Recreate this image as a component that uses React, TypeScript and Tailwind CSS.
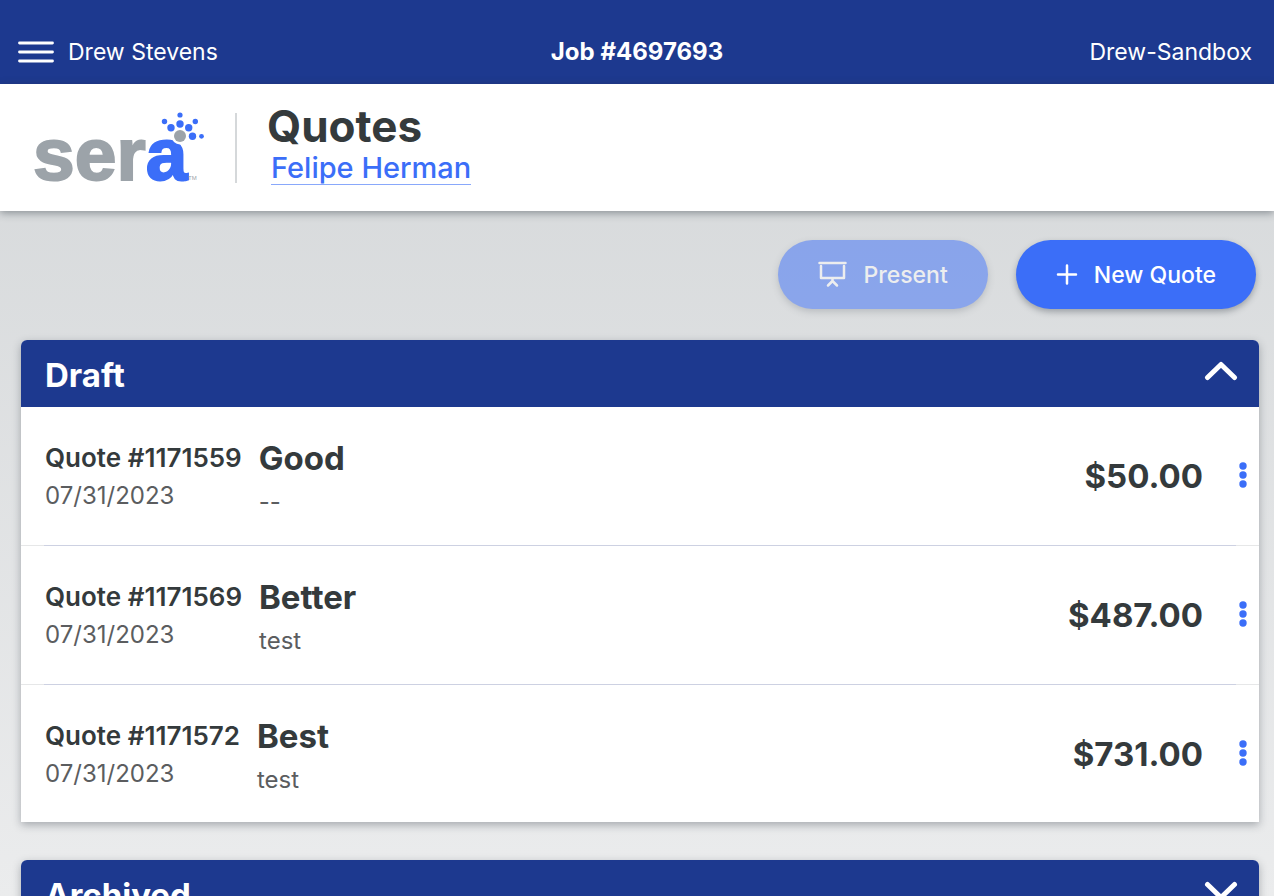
import { useState } from "react";

type Quote = {
  id: number;
  date: string;
  name: string;
  desc: string;
  total: string;
};

const drafts: Quote[] = [
  { id: 1171559, date: "07/31/2023", name: "Good", desc: "--", total: "$50.00" },
  { id: 1171569, date: "07/31/2023", name: "Better", desc: "test", total: "$487.00" },
  { id: 1171572, date: "07/31/2023", name: "Best", desc: "test", total: "$731.00" },
];

const Logo = () => (
  <svg
    width="172"
    height="74"
    viewBox="0 0 172 74"
    aria-label="sera"
    className="overflow-visible font-['Liberation_Sans',sans-serif]"
  >
    <text
      x="-1"
      y="69"
      fontSize="75"
      strokeWidth="2"
      className="fill-[#9ca3a9] stroke-[#9ca3a9] font-bold"
    >
      ser<tspan className="fill-[#3b6ef8] stroke-[#3b6ef8]">a</tspan>
    </text>
    <circle cx="146" cy="25" r="8.500" fill="#fff" />
    <circle cx="146" cy="25" r="6" fill="#9ca3a9" />
    <g fill="#3b6ef8">
      <circle cx="146" cy="4" r="2.600" />
      <circle cx="130.500" cy="10.500" r="2.700" />
      <circle cx="161.300" cy="10.500" r="2.700" />
      <circle cx="146" cy="13" r="3.700" />
      <circle cx="137" cy="16.700" r="3.700" />
      <circle cx="154.700" cy="16.700" r="3.700" />
      <circle cx="158.500" cy="25.300" r="3.700" />
      <circle cx="167.500" cy="25.300" r="2.400" />
    </g>
    <text x="154" y="69" fontSize="6" className="fill-[#9ca3a9]">
      TM
    </text>
  </svg>
);

const Chevron = ({ open }: { open: boolean }) => (
  <svg
    width="34"
    height="20"
    viewBox="0 0 34 20"
    fill="none"
    stroke="#fff"
    strokeWidth="5"
    strokeLinecap="round"
    strokeLinejoin="round"
    className={open ? "mb-2" : "mb-2 rotate-180"}
  >
    <path d="M3.500 16.500L17 3.500L30.500 16.500" />
  </svg>
);

const QuoteRow = ({ quote }: { quote: Quote }) => (
  <li className="group">
    <div className="flex h-[138px] items-center pr-1 pl-6 group-last:h-[137px]">
      <div className="flex flex-1 items-start gap-[17px] pt-1">
        <div className="pt-1">
          <p className="text-[26px] leading-8 font-semibold text-[#343a3c]">
            Quote #{quote.id}
          </p>
          <p className="mt-1.5 text-[24px] leading-8 text-[#5b5d5f]">{quote.date}</p>
        </div>
        <div>
          <h3 className="text-[33px] leading-10 font-bold text-[#343a3c]">{quote.name}</h3>
          <p className="mt-2 text-[24px] leading-8 text-[#5b5d5f]">{quote.desc}</p>
        </div>
      </div>
      <p className="text-[33px] leading-10 font-bold text-[#343a3c]">{quote.total}</p>
      <button
        aria-label={`Options for quote ${quote.id}`}
        className="ml-7 flex h-10 w-6 items-center justify-center"
      >
        <svg width="8" height="28" viewBox="0 0 8 28" fill="#3b6ef8">
          <circle cx="4" cy="4" r="3.700" />
          <circle cx="4" cy="13" r="3.700" />
          <circle cx="4" cy="22" r="3.700" />
        </svg>
      </button>
    </div>
    <div className="bg-[#e6e7e8] px-[23px] group-last:hidden">
      <div className="h-px bg-[#cdd1e2]" />
    </div>
  </li>
);

const Section = ({
  title,
  quotes,
  defaultOpen,
}: {
  title: string;
  quotes: Quote[];
  defaultOpen: boolean;
}) => {
  const [open, setOpen] = useState(defaultOpen);

  return (
    <section className="rounded-t-md bg-white shadow-[0_3px_8px_rgba(40,50,60,0.35)]">
      <h2>
        <button
          onClick={() => setOpen(!open)}
          aria-expanded={open}
          className="flex h-[67px] w-full items-center justify-between rounded-t-md bg-[#1d398f] pt-0.5 pr-[21px] pl-6 text-[33px] leading-10 font-bold text-white"
        >
          {title}
          <Chevron open={open} />
        </button>
      </h2>
      {open && (
        <ul>
          {quotes.map((quote) => (
            <QuoteRow key={quote.id} quote={quote} />
          ))}
        </ul>
      )}
    </section>
  );
};

const App = () => {
  return (
    <div className="h-screen overflow-y-auto bg-linear-to-b from-[#d3d6d8] to-[#ebeced] font-[Inter,sans-serif] [scrollbar-width:none]">
      <nav className="grid h-[84px] grid-cols-3 items-end bg-[#1d398f] px-[18px] pb-4 text-[23px] leading-8 text-white">
        <div className="flex items-center gap-[14px]">
          <button aria-label="Menu">
            <svg
              width="36"
              height="24"
              viewBox="0 0 36 24"
              stroke="#fff"
              strokeWidth="2.800"
              strokeLinecap="round"
            >
              <path d="M1.500 3H34.500M1.500 12H34.500M1.500 21H34.500" />
            </svg>
          </button>
          <span>Drew Stevens</span>
        </div>
        <p className="text-center text-[24px] font-bold">Job #4697693</p>
        <p className="pr-1 text-right">Drew-Sandbox</p>
      </nav>

      <header className="relative flex h-[127px] items-center bg-white pl-[34px] shadow-[0_2px_8px_rgba(40,50,60,0.45)]">
        <Logo />
        <div className="ml-[29px] h-[70px] w-0.5 bg-[#d5d8da]" />
        <div className="ml-[30px] pb-1.5">
          <h1 className="mb-1 text-[44px] leading-[44px] font-bold text-[#343a3c]">Quotes</h1>
          <a
            href="#customer"
            className="ml-1 block border-b border-[#3b6ef8]/60 text-[29px] leading-8 font-medium text-[#3b6ef8]"
          >
            Felipe Herman
          </a>
        </div>
      </header>

      <main className="pr-[15px] pb-8 pl-[21px]">
        <div className="flex justify-end gap-7 pt-[29px] pr-[3px] pb-[31px] text-[23px] leading-8 font-medium text-white">
          <button
            disabled
            className="flex h-[69px] items-center gap-4 rounded-full bg-[#3b6ef8] px-10 opacity-50 shadow-[0_3px_6px_rgba(40,50,60,0.35)]"
          >
            <svg
              width="29"
              height="28"
              viewBox="0 0 29 28"
              fill="none"
              stroke="currentColor"
              strokeWidth="2.500"
              strokeLinecap="round"
              strokeLinejoin="round"
            >
              <path d="M1.500 2H27.500M3 5V17H26V5M14.500 17V20L10 24.500M14.500 20L19 24.500" />
            </svg>
            Present
          </button>
          <button className="flex h-[69px] items-center gap-4 rounded-full bg-[#3b6ef8] px-10 shadow-[0_3px_6px_rgba(40,50,60,0.35)]">
            <svg
              width="22"
              height="22"
              viewBox="0 0 22 22"
              stroke="currentColor"
              strokeWidth="2.500"
              strokeLinecap="round"
            >
              <path d="M2 10.500H20M11 1.500V19.500" />
            </svg>
            New Quote
          </button>
        </div>

        <div className="flex flex-col gap-[38px]">
          <Section title="Draft" quotes={drafts} defaultOpen />
          <Section title="Archived" quotes={[]} defaultOpen={false} />
        </div>
      </main>
    </div>
  );
};

export default App;
